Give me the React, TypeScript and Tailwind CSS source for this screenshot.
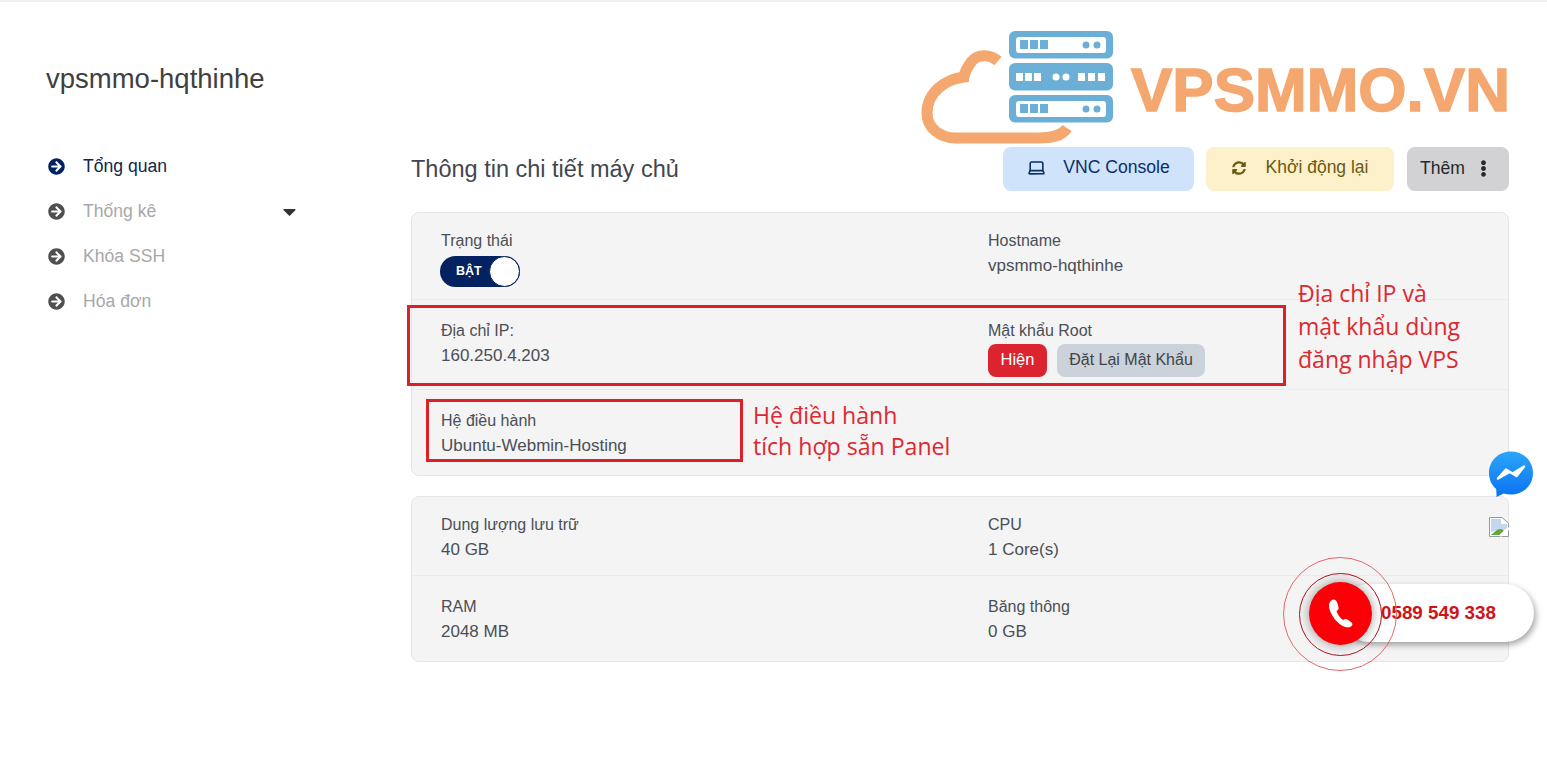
import { Laptop } from 'lucide-react';
import { FaArrowCircleRight, FaCaretDown, FaEllipsisV, FaSyncAlt } from 'react-icons/fa';

const menu = [
  { label: 'Tổng quan', active: true },
  { label: 'Thống kê', caret: true },
  { label: 'Khóa SSH' },
  { label: 'Hóa đơn' },
];

function Field({ label, value }: { label: string; value: string }) {
  return (
    <div>
      <div className="leading-[25px]">{label}</div>
      <div className="leading-[25px] text-[17px]">{value}</div>
    </div>
  );
}

function Row({ className, left, right }: { className: string; left: React.ReactNode; right?: React.ReactNode }) {
  return (
    <div className={`flex pl-[29px] border-[#ebebeb] ${className}`}>
      <div className="w-[547px]">{left}</div>
      <div>{right}</div>
    </div>
  );
}

function Logo() {
  return (
    <div className="absolute left-[920px] top-[26px] flex items-start">
      <svg width="200" height="120" viewBox="0 0 200 120" className="shrink-0">
        <path
          d="M78 33 C70 26 58 26 52 33 C48 38 45 43 44 49 C26 51 7 64 7 85 C7 100 20 110 36 110 L118 110 C132 110 142 108 147 100"
          fill="none"
          stroke="#f4a76f"
          strokeWidth="11"
        />
        {[3, 35, 67].map((y, i) => (
          <g key={y}>
            <rect x="89" y={y} width="104" height="27.5" rx="6" fill="#6bafd6" />
            {i === 1 ? (
              <>
                {[96, 105, 114, 158, 168, 178].map((x) => (
                  <rect key={x} x={x} y={y + 10} width="7" height="8" fill="#fff" />
                ))}
                <circle cx="136" cy={y + 14} r="3.5" fill="#fff" />
                <circle cx="146" cy={y + 14} r="3.5" fill="#fff" />
              </>
            ) : (
              <>
                <rect x="96" y={y + 6} width="90" height="16" rx="3" fill="#fff" />
                {[100, 110, 120].map((x) => (
                  <rect key={x} x={x} y={y + 9} width="8" height="9" fill="#6bafd6" />
                ))}
                <circle cx="166" cy={y + 14} r="3.5" fill="#6bafd6" />
                <circle cx="177" cy={y + 14} r="3.5" fill="#6bafd6" />
              </>
            )}
          </g>
        ))}
      </svg>
      <span className="ml-[11px] mt-[27px] text-[62px] leading-[70px] font-bold text-[#f4a76f] whitespace-nowrap [-webkit-text-stroke:1.5px_#f4a76f]">VPSMMO.VN</span>
    </div>
  );
}

function Messenger() {
  return (
    <svg width="46" height="47" viewBox="0 0 46 47" className="absolute left-[1488px] top-[449px]">
      <defs>
        <linearGradient id="msg" x1="0" y1="0" x2="0" y2="1">
          <stop offset="0" stopColor="#2ba6f9" />
          <stop offset="1" stopColor="#0a72f2" />
        </linearGradient>
      </defs>
      <path d="M23 0.5 C10.5 0.5 1 9.7 1 22 C1 28.6 3.7 34.2 8.2 38.1 L8.6 46 L15.6 42.6 C18 43.3 20.4 43.6 23 43.6 C35.5 43.6 45 34.3 45 22 C45 9.7 35.5 0.5 23 0.5 Z" fill="url(#msg)" />
      <path d="M10 27.5 L18 18.5 L24.5 22.5 L36 15.5 L28.5 25 L21.5 20.8 Z" fill="#fff" stroke="#fff" strokeWidth="2.5" strokeLinejoin="round" />
    </svg>
  );
}

function BrokenImage() {
  return (
    <svg width="20" height="20" viewBox="0 0 20 20" className="absolute left-[1489px] top-[515px]">
      <path d="M0.5 0.5 H13 L19.5 6 V19.5 H0.5 Z" fill="#fff" stroke="#9a9a9a" />
      <path d="M2 2 H12 V7 H18 V12 L2 15 Z" fill="#c5d7ee" />
      <path d="M2 18 L8 13 C11 11 14 12 15 14 L11 18 Z" fill="#5fa83e" />
      <path d="M11 19 L20 11" stroke="#fff" strokeWidth="2.5" />
    </svg>
  );
}

function CallWidget() {
  return (
    <div className="absolute left-[1283px] top-[554px] w-[264px] h-[118px]">
      <div className="absolute left-[57px] top-[28px] w-[194px] h-[58px] rounded-full bg-white shadow-[2px_3px_6px_rgba(0,0,0,0.35)]" />
      <div className="absolute left-[98px] top-[44px] text-[18.8px] leading-[25px] font-bold text-[#cf1418] whitespace-nowrap">0589 549 338</div>
      <div className="absolute left-[16px] top-[17px] w-[83px] h-[83px] rounded-full border-[1.5px] border-[#b4141c]" />
      <div className="absolute left-[0px] top-[1px] w-[114px] h-[114px] rounded-full border-[1.5px] border-[#e5666c]" />
      <div className="absolute left-[26px] top-[26px] w-[63px] h-[63px] rounded-full bg-[#fb0007] shadow-[0_0_12px_rgba(0,0,0,0.4)] flex items-center justify-center">
        <svg width="27" height="31" viewBox="0 0 27 31" fill="#fff">
          <path d="M5 2 C7 1 9 2 10 4 L11.5 9 C12 11 11 12 9.5 13 C10.5 16.5 13 20 16 22 C17.5 21 19 20.5 20.5 21.5 L24.5 24.5 C26 26 25.5 27.5 24 28.5 C21.5 30 18 29.5 14 27 C8 23 3 15 2 9 C1.5 6 3 3 5 2 Z" />
        </svg>
      </div>
    </div>
  );
}

export default function App() {
  return (
    <div className="relative h-[776px] w-[1547px] overflow-hidden bg-white border-t-2 border-[#eeeeee] text-[#4a4f55] text-[16px] font-['Liberation_Sans',Arial,sans-serif]">
      <div className="flex">
        <aside className="w-[411px] shrink-0 pl-[46px] pt-[59px]">
          <h1 className="text-[27.5px] leading-[36px] text-[#404040]">vpsmmo-hqthinhe</h1>
          <nav className="mt-[47px] pl-[2px]">
            {menu.map((item) => (
              <div key={item.label} className="flex items-center h-[45px] w-[252px]">
                <FaArrowCircleRight className={`text-[17px] ${item.active ? 'text-[#04225f]' : 'text-[#4f4f4f]'}`} />
                <span className={`ml-[18px] text-[17.6px] ${item.active ? 'text-[#10264f]' : 'text-[#a8a8a8]'}`}>{item.label}</span>
                {item.caret && <FaCaretDown className="ml-auto text-[#333] text-[21px]" />}
              </div>
            ))}
          </nav>
        </aside>

        <main className="w-[1098px] pt-[145px]">
          <div className="flex items-center h-[44px]">
            <h2 className="pt-[2px] text-[23.5px] text-[#43474d]">Thông tin chi tiết máy chủ</h2>
            <button className="ml-auto w-[191px] h-[44px] pb-[3px] rounded-lg bg-[#cfe4fa] text-[#0b2d6b] text-[17.6px] flex items-center justify-center gap-[17px]">
              <Laptop size={19} strokeWidth={2} />
              VNC Console
            </button>
            <button className="ml-[12px] w-[188px] h-[44px] pb-[3px] rounded-lg bg-[#fdf1cc] text-[#6b5a12] text-[17.5px] flex items-center justify-center gap-[20px]">
              <FaSyncAlt className="text-[14px]" />
              Khởi động lại
            </button>
            <button className="ml-[13px] w-[102px] h-[44px] pb-[2px] pl-[13px] rounded-lg bg-[#d2d2d4] text-[#26282b] text-[17.6px] flex items-center gap-[10px]">
              Thêm
              <FaEllipsisV className="text-[17px]" />
            </button>
          </div>

          <section className="mt-[21px] h-[264px] rounded-lg border border-[#e6e6e6] bg-[#f4f4f5]">
            <Row
              className="h-[87px] pt-[15px] border-b"
              left={
                <>
                  <div className="leading-[25px]">Trạng thái</div>
                  <div className="mt-[3px] -ml-px relative w-[80px] h-[31px] rounded-full bg-[#04225f] flex items-center">
                    <span className="ml-[16px] text-white text-[12.5px] font-bold">BẬT</span>
                    <span className="absolute right-0 top-0 w-[31px] h-[31px] rounded-full bg-white border border-[#04225f]" />
                  </div>
                </>
              }
              right={<Field label="Hostname" value="vpsmmo-hqthinhe" />}
            />
            <Row
              className="h-[90px] pt-[18px] border-b"
              left={<Field label="Địa chỉ IP:" value="160.250.4.203" />}
              right={
                <>
                  <div className="leading-[25px]">Mật khẩu Root</div>
                  <div className="flex gap-[10px] mt-[1px]">
                    <button className="h-[33px] w-[59px] pb-[2px] rounded-lg bg-[#dc2430] text-white text-[16.5px]">Hiện</button>
                    <button className="h-[33px] w-[148px] pb-[2px] rounded-lg bg-[#ccd2d9] text-[#3f444a] text-[16px]">Đặt Lại Mật Khẩu</button>
                  </div>
                </>
              }
            />
            <Row className="pt-[18px]" left={<Field label="Hệ điều hành" value="Ubuntu-Webmin-Hosting" />} />
          </section>

          <section className="mt-[20px] h-[166px] rounded-lg border border-[#e6e6e6] bg-[#f4f4f5]">
            <Row
              className="h-[79px] pt-[15px] border-b"
              left={<Field label="Dung lượng lưu trữ" value="40 GB" />}
              right={<Field label="CPU" value="1 Core(s)" />}
            />
            <Row className="pt-[18px]" left={<Field label="RAM" value="2048 MB" />} right={<Field label="Băng thông" value="0 GB" />} />
          </section>
        </main>
      </div>

      <Logo />

      {/* annotations drawn on top of the screenshot */}
      <div className="absolute left-[407px] top-[303px] w-[879px] h-[81px] border-[3px] border-[#dd2027]" />
      <div className="absolute left-[426px] top-[397px] w-[317px] h-[63px] border-[3px] border-[#dd2027]" />
      <div className="absolute left-[1298px] top-[275px] text-[23px] leading-[33px] font-medium text-[#e0272f] font-['Open_Sans',sans-serif] whitespace-nowrap">
        Địa chỉ IP và<br />mật khẩu dùng<br />đăng nhập VPS
      </div>
      <div className="absolute left-[753px] top-[398px] text-[23.1px] leading-[31px] font-medium text-[#e0272f] font-['Open_Sans',sans-serif] whitespace-nowrap">
        Hệ điều hành<br />tích hợp sẵn Panel
      </div>

      <Messenger />
      <BrokenImage />
      <CallWidget />
    </div>
  );
}
